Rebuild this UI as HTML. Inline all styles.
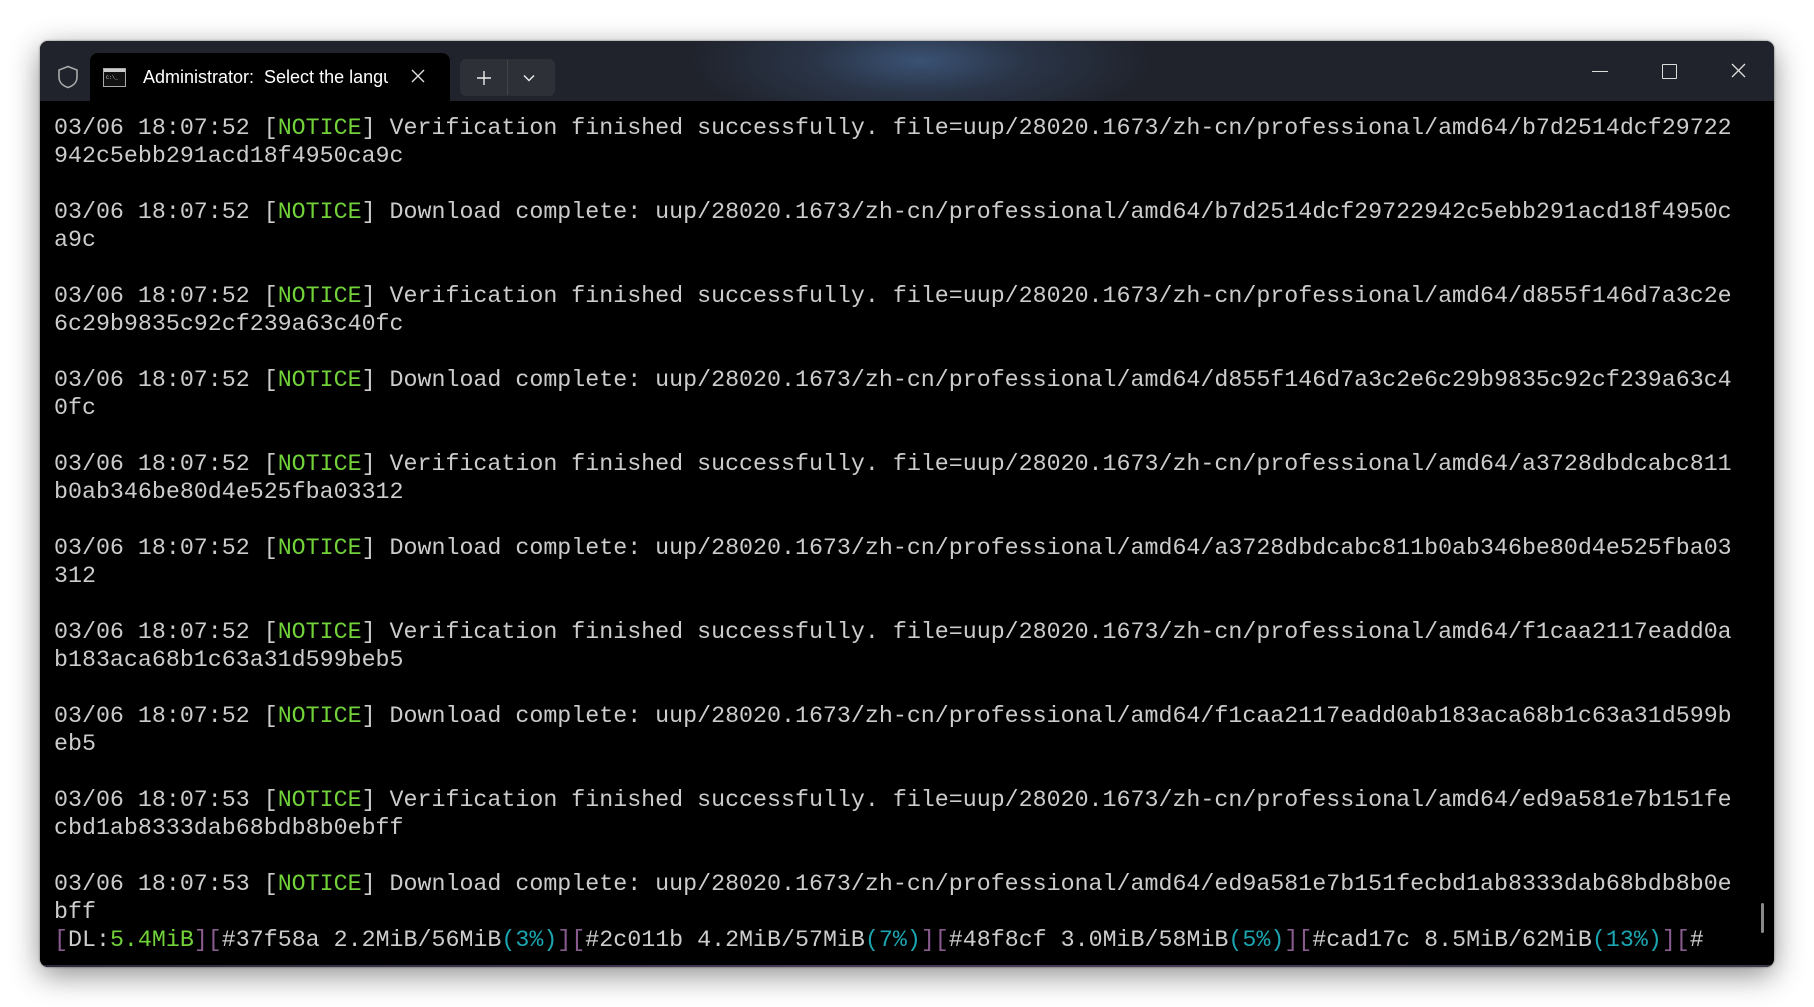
<!DOCTYPE html>
<html><head><meta charset="utf-8"><style>
html,body{margin:0;padding:0;width:1814px;height:1007px;background:#fff;overflow:hidden}
.win{position:absolute;left:40px;top:41px;width:1734px;height:926px;background:#000;border-radius:8px;overflow:hidden;box-shadow:0 8px 30px rgba(0,0,0,.45),0 0 2px rgba(0,0,0,.5)}
.tb{position:absolute;left:0;top:0;width:100%;height:60px;background:radial-gradient(ellipse 230px 70px at 880px 20px,#3a5274 0%,#2a3548 45%,rgba(32,35,45,0) 100%),#20232c}
.tab{position:absolute;left:50px;top:12px;width:360px;height:48px;background:#000;border-radius:8px 8px 0 0}
.tt{position:absolute;left:103px;top:26px;font:18px "Liberation Sans",sans-serif;color:#fff;white-space:nowrap;width:245px;overflow:hidden}
.grp{position:absolute;left:420px;top:18px;width:95px;height:37px;background:#2e3038;border-radius:6px}
.txt{position:absolute;left:14px;top:73px;font:23.3px/28px "Liberation Mono",monospace;color:#cccccc;white-space:pre;margin:0}
.g{color:#72d23a}.c{color:#1ba5b0}.p{color:#8a5b8e}
.sb{position:absolute;left:1721px;top:862px;width:3px;height:30px;background:#888;border-radius:2px}
</style></head><body>
<div class="win">
<div class="tb">
<svg style="position:absolute;left:17px;top:24px" width="22" height="24" viewBox="0 0 22 24"><path d="M11 1.5 L20 5 V12 C20 17.5 16 21 11 22.5 C6 21 2 17.5 2 12 V5 Z" fill="none" stroke="#aaa" stroke-width="1.6"/></svg>
<div class="tab"></div>
<svg style="position:absolute;left:63px;top:27px" width="23" height="19" viewBox="0 0 23 19"><rect x="0.5" y="0.5" width="22" height="18" fill="#111" stroke="#aaa"/><rect x="1" y="1" width="21" height="3" fill="#ccc"/><text x="3" y="11" font-size="5" fill="#ccc" font-family="Liberation Mono">C:\_</text></svg>
<div class="tt">Administrator:&nbsp; Select the language</div>
<svg style="position:absolute;left:371px;top:28px" width="14" height="14" viewBox="0 0 14 14"><path d="M1 1L13 13M13 1L1 13" stroke="#ddd" stroke-width="1.4"/></svg>
<div class="grp"></div>
<div style="position:absolute;left:467px;top:19px;width:1px;height:35px;background:#444"></div>
<svg style="position:absolute;left:436px;top:29px" width="16" height="16" viewBox="0 0 16 16"><path d="M8 1V15M1 8H15" stroke="#eee" stroke-width="1.4"/></svg>
<svg style="position:absolute;left:483px;top:33px" width="12" height="8" viewBox="0 0 12 8"><path d="M1 1.5L6 6.5L11 1.5" fill="none" stroke="#eee" stroke-width="1.4"/></svg>
<div style="position:absolute;left:1552px;top:30px;width:16px;height:1.3px;background:#ddd"></div>
<div style="position:absolute;left:1622px;top:23px;width:13px;height:13px;border:1.3px solid #ddd;border-radius:1px"></div>
<svg style="position:absolute;left:1691px;top:22px" width="15" height="15" viewBox="0 0 15 15"><path d="M1 1L14 14M14 1L1 14" stroke="#ddd" stroke-width="1.3"/></svg>
</div>
<pre class="txt">03/06 18:07:52 [<span class="g">NOTICE</span>] Verification finished successfully. file=uup/28020.1673/zh-cn/professional/amd64/b7d2514dcf29722
942c5ebb291acd18f4950ca9c

03/06 18:07:52 [<span class="g">NOTICE</span>] Download complete: uup/28020.1673/zh-cn/professional/amd64/b7d2514dcf29722942c5ebb291acd18f4950c
a9c

03/06 18:07:52 [<span class="g">NOTICE</span>] Verification finished successfully. file=uup/28020.1673/zh-cn/professional/amd64/d855f146d7a3c2e
6c29b9835c92cf239a63c40fc

03/06 18:07:52 [<span class="g">NOTICE</span>] Download complete: uup/28020.1673/zh-cn/professional/amd64/d855f146d7a3c2e6c29b9835c92cf239a63c4
0fc

03/06 18:07:52 [<span class="g">NOTICE</span>] Verification finished successfully. file=uup/28020.1673/zh-cn/professional/amd64/a3728dbdcabc811
b0ab346be80d4e525fba03312

03/06 18:07:52 [<span class="g">NOTICE</span>] Download complete: uup/28020.1673/zh-cn/professional/amd64/a3728dbdcabc811b0ab346be80d4e525fba03
312

03/06 18:07:52 [<span class="g">NOTICE</span>] Verification finished successfully. file=uup/28020.1673/zh-cn/professional/amd64/f1caa2117eadd0a
b183aca68b1c63a31d599beb5

03/06 18:07:52 [<span class="g">NOTICE</span>] Download complete: uup/28020.1673/zh-cn/professional/amd64/f1caa2117eadd0ab183aca68b1c63a31d599b
eb5

03/06 18:07:53 [<span class="g">NOTICE</span>] Verification finished successfully. file=uup/28020.1673/zh-cn/professional/amd64/ed9a581e7b151fe
cbd1ab8333dab68bdb8b0ebff

03/06 18:07:53 [<span class="g">NOTICE</span>] Download complete: uup/28020.1673/zh-cn/professional/amd64/ed9a581e7b151fecbd1ab8333dab68bdb8b0e
bff
<span class="p">[</span>DL:<span class="g">5.4MiB</span><span class="p">][</span>#37f58a 2.2MiB/56MiB<span class="c">(3%)</span><span class="p">][</span>#2c011b 4.2MiB/57MiB<span class="c">(7%)</span><span class="p">][</span>#48f8cf 3.0MiB/58MiB<span class="c">(5%)</span><span class="p">][</span>#cad17c 8.5MiB/62MiB<span class="c">(13%)</span><span class="p">][</span>#</pre>
<div class="sb"></div>
<div style="position:absolute;left:0;bottom:0;width:100%;height:2px;background:linear-gradient(90deg,#2a2a3a,#4a3a5a,#3a3a4a)"></div>
</div>
</body></html>
